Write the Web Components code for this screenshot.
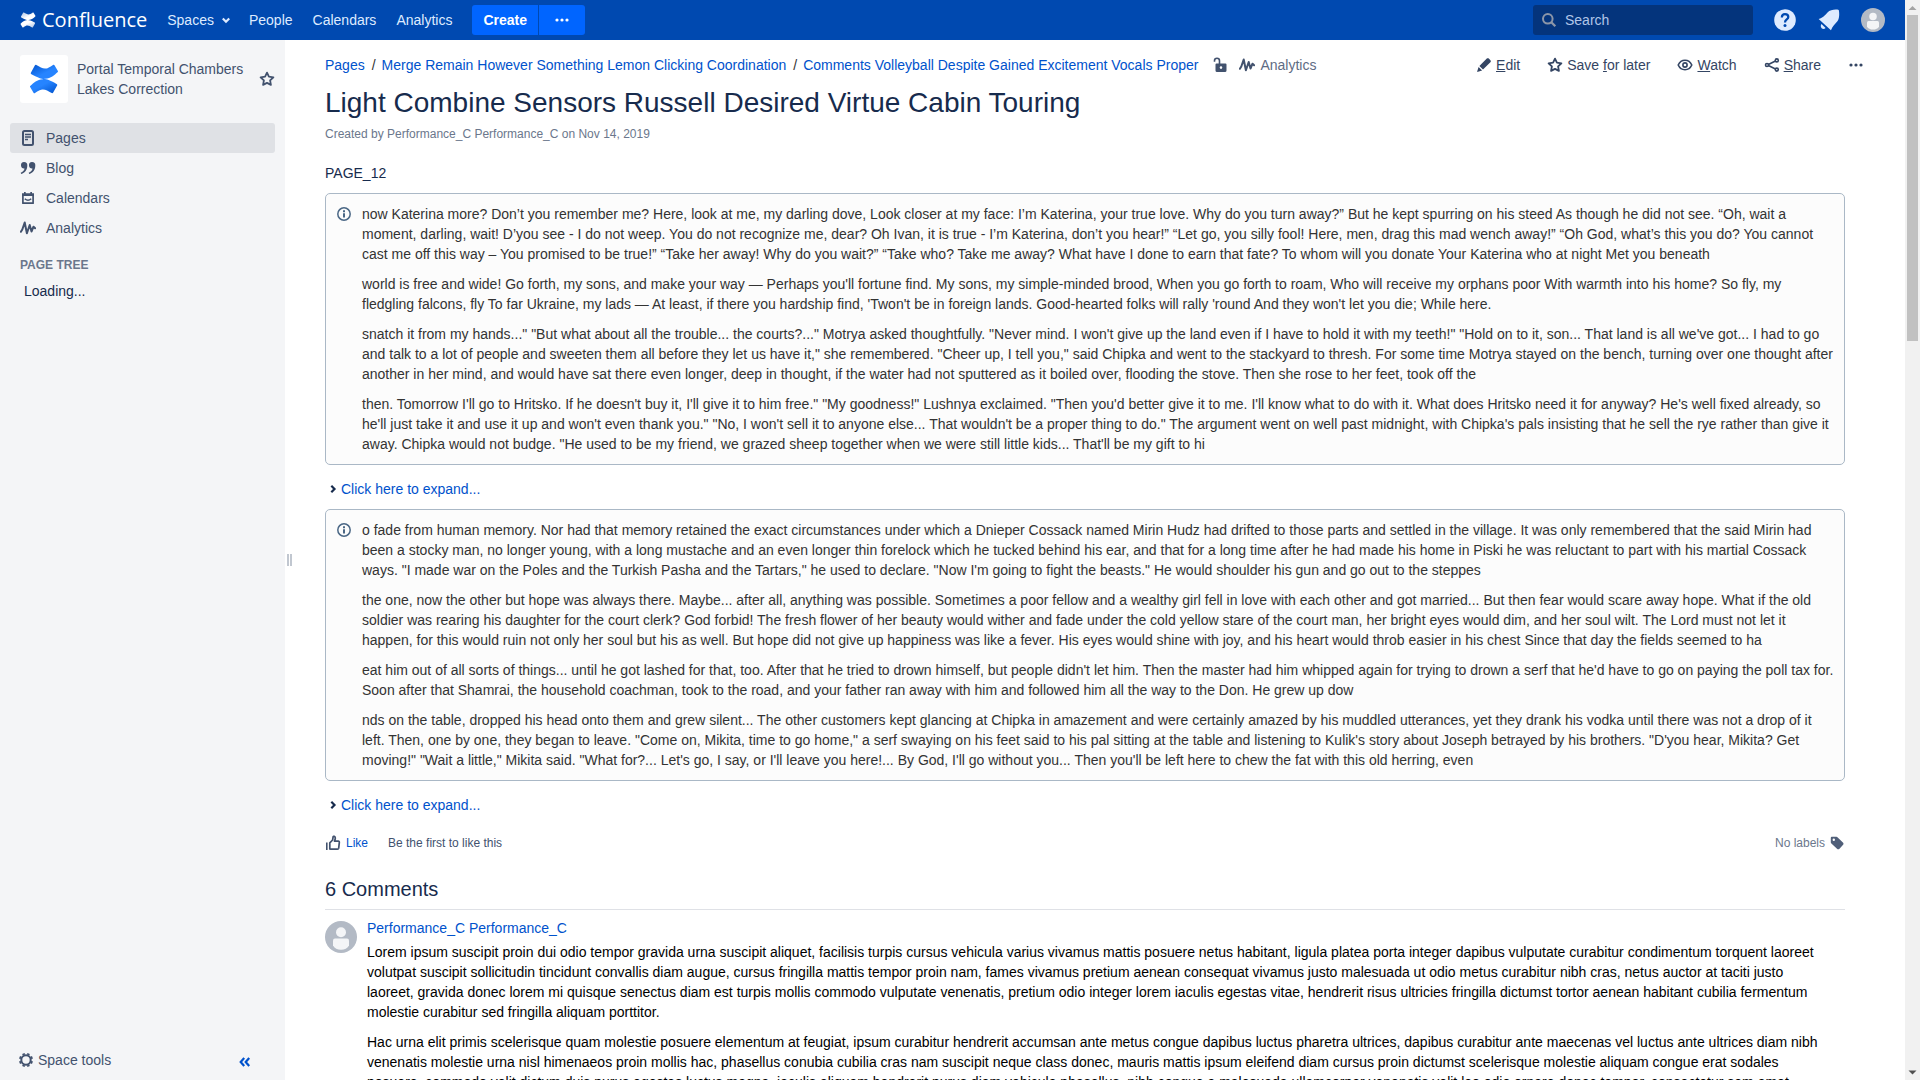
<!DOCTYPE html>
<html lang="en">
<head>
<meta charset="utf-8">
<title>Light Combine Sensors Russell Desired Virtue Cabin Touring - Confluence</title>
<style>
  :root {
    --header: #0049b0;
    --header-text: #deebff;
    --link: #0052cc;
    --heading: #172b4d;
    --text: #333333;
    --subtle: #42526e;
    --muted: #6b778c;
    --panel: #f4f5f7;
  }
  html, body { margin: 0; height: 100%; overflow: hidden; }
  body {
    font: 14px/20px "Liberation Sans", Arial, sans-serif;
    color: var(--heading);
    background: #fff;
  }
</style>
</head>
<body>
<cf-app>
  <cf-header slot="header"></cf-header>
  <cf-sidebar slot="sidebar"></cf-sidebar>
  <cf-page-bar slot="main"></cf-page-bar>
  <cf-title slot="main">Light Combine Sensors Russell Desired Virtue Cabin Touring<span slot="byline">Created by Performance_C Performance_C on Nov 14, 2019</span></cf-title>
  <cf-content slot="main">
    <p>PAGE_12</p>
    <cf-info>
      <p>now Katerina more? Don’t you remember me? Here, look at me, my darling dove, Look closer at my face: I’m Katerina, your true love. Why do you turn away?” But he kept spurring on his steed As though he did not see. “Oh, wait a moment, darling, wait! D’you see - I do not weep. You do not recognize me, dear? Oh Ivan, it is true - I’m Katerina, don’t you hear!” “Let go, you silly fool! Here, men, drag this mad wench away!” “Oh God, what’s this you do? You cannot cast me off this way – You promised to be true!” “Take her away! Why do you wait?” “Take who? Take me away? What have I done to earn that fate? To whom will you donate Your Katerina who at night Met you beneath</p>
      <p>world is free and wide! Go forth, my sons, and make your way — Perhaps you'll fortune find. My sons, my simple-minded brood, When you go forth to roam, Who will receive my orphans poor With warmth into his home? So fly, my fledgling falcons, fly To far Ukraine, my lads — At least, if there you hardship find, 'Twon't be in foreign lands. Good-hearted folks will rally 'round And they won't let you die; While here.</p>
      <p>snatch it from my hands..." "But what about all the trouble... the courts?..." Motrya asked thoughtfully. "Never mind. I won't give up the land even if I have to hold it with my teeth!" "Hold on to it, son... That land is all we've got... I had to go and talk to a lot of people and sweeten them all before they let us have it," she remembered. "Cheer up, I tell you," said Chipka and went to the stackyard to thresh. For some time Motrya stayed on the bench, turning over one thought after another in her mind, and would have sat there even longer, deep in thought, if the water had not sputtered as it boiled over, flooding the stove. Then she rose to her feet, took off the</p>
      <p>then. Tomorrow I'll go to Hritsko. If he doesn't buy it, I'll give it to him free." "My goodness!" Lushnya exclaimed. "Then you'd better give it to me. I'll know what to do with it. What does Hritsko need it for anyway? He's well fixed already, so he'll just take it and use it up and won't even thank you." "No, I won't sell it to anyone else... That wouldn't be a proper thing to do." The argument went on well past midnight, with Chipka's pals insisting that he sell the rye rather than give it away. Chipka would not budge. "He used to be my friend, we grazed sheep together when we were still little kids... That'll be my gift to hi</p>
    </cf-info>
    <cf-expand>Click here to expand...</cf-expand>
    <cf-info>
      <p>o fade from human memory. Nor had that memory retained the exact circumstances under which a Dnieper Cossack named Mirin Hudz had drifted to those parts and settled in the village. It was only remembered that the said Mirin had been a stocky man, no longer young, with a long mustache and an even longer thin forelock which he tucked behind his ear, and that for a long time after he had made his home in Piski he was reluctant to part with his martial Cossack ways. "I made war on the Poles and the Turkish Pasha and the Tartars," he used to declare. "Now I'm going to fight the beasts." He would shoulder his gun and go out to the steppes</p>
      <p>the one, now the other but hope was always there. Maybe... after all, anything was possible. Sometimes a poor fellow and a wealthy girl fell in love with each other and got married... But then fear would scare away hope. What if the old soldier was rearing his daughter for the court clerk? God forbid! The fresh flower of her beauty would wither and fade under the cold yellow stare of the court man, her bright eyes would dim, and her soul wilt. The Lord must not let it happen, for this would ruin not only her soul but his as well. But hope did not give up happiness was like a fever. His eyes would shine with joy, and his heart would throb easier in his chest Since that day the fields seemed to ha</p>
      <p>eat him out of all sorts of things... until he got lashed for that, too. After that he tried to drown himself, but people didn't let him. Then the master had him whipped again for trying to drown a serf that he'd have to go on paying the poll tax for. Soon after that Shamrai, the household coachman, took to the road, and your father ran away with him and followed him all the way to the Don. He grew up dow</p>
      <p>nds on the table, dropped his head onto them and grew silent... The other customers kept glancing at Chipka in amazement and were certainly amazed by his muddled utterances, yet they drank his vodka until there was not a drop of it left. Then, one by one, they began to leave. "Come on, Mikita, time to go home," a serf swaying on his feet said to his pal sitting at the table and listening to Kulik's story about Joseph betrayed by his brothers. "D'you hear, Mikita? Get moving!" "Wait a little," Mikita said. "What for?... Let's go, I say, or I'll leave you here!... By God, I'll go without you... Then you'll be left here to chew the fat with this old herring, even</p>
    </cf-info>
    <cf-expand>Click here to expand...</cf-expand>
  </cf-content>
  <cf-likes slot="main"></cf-likes>
  <cf-comments slot="main" heading="6 Comments">
    <cf-comment author="Performance_C Performance_C">
      <p>Lorem ipsum suscipit proin dui odio tempor gravida urna suscipit aliquet, facilisis turpis cursus vehicula varius vivamus mattis posuere netus habitant, ligula platea porta integer dapibus vulputate curabitur condimentum torquent laoreet volutpat suscipit sollicitudin tincidunt convallis diam augue, cursus fringilla mattis tempor proin nam, fames vivamus pretium aenean consequat vivamus justo malesuada ut odio metus curabitur nibh cras, netus auctor at taciti justo laoreet, gravida donec lorem mi quisque senectus diam est turpis mollis commodo vulputate venenatis, pretium odio integer lorem iaculis egestas vitae, hendrerit risus ultricies fringilla dictumst tortor aenean habitant cubilia fermentum molestie curabitur sed fringilla aliquam porttitor.</p>
      <p>Hac urna elit primis scelerisque quam molestie posuere elementum at feugiat, ipsum curabitur hendrerit accumsan ante metus congue dapibus luctus pharetra ultrices, dapibus curabitur ante maecenas vel luctus ante ultrices diam nibh venenatis molestie urna nisl himenaeos proin mollis hac, phasellus conubia cubilia cras nam suscipit neque class donec, mauris mattis ipsum eleifend diam cursus proin dictumst scelerisque molestie aliquam congue erat sodales posuere, commodo velit dictum duis purus egestas luctus magna, iaculis aliquam hendrerit purus diam vehicula phasellus, nibh congue a malesuada ullamcorper venenatis velit leo odio ornare donec tempor, consectetur sem amet</p>
    </cf-comment>
  </cf-comments>
  <cf-scrollbar slot="scrollbar"></cf-scrollbar>
</cf-app>

<script>
const ICONS = {
  page: '<rect x="3" y="1" width="10" height="14" rx="1.5" fill="none" stroke="currentColor" stroke-width="2"/><path d="M5 4.500h6M5 7h6M5 9.500h3" stroke="currentColor" stroke-width="1.300"/>',
  quote: '<path d="M4 2a3.300 3.300 0 0 1 3.300 3.500C7.300 9.500 5 13 1.200 14l-.5-1.200C2.800 12 4.200 10.500 4.500 8.500A3.200 3.200 0 1 1 4 2zM12 2a3.300 3.300 0 0 1 3.300 3.500c0 4-2.300 7.500-6.100 8.500l-.5-1.200c2.100-.8 3.500-2.300 3.800-4.300A3.200 3.200 0 1 1 12 2z" fill="currentColor"/>',
  calendar: '<path d="M2.900 5v8.200h10.200V5" fill="none" stroke="currentColor" stroke-width="1.700" stroke-linejoin="round"/><path d="M2 3.200h12v2.800H2zM4 2h1.700v2H4zM10.300 2H12v2h-1.700z" fill="currentColor"/><path d="M4.800 8.800q3.200 3 6.400 0" fill="none" stroke="currentColor" stroke-width="1.500"/>',
  pulse: '<path d="M.9 11.800 2.300 9.500 4.700 2.500l2.200 10.800 2.800-8.300 1.800 6.500 2-4.800 1.600 1.600" fill="none" stroke="currentColor" stroke-width="2" stroke-linejoin="round" stroke-linecap="round"/>',
  star: '<path d="M8 1.600l1.900 4.100 4.500.6-3.300 3.100.8 4.500L8 11.900l-3.900 2 .8-4.500L1.600 6.300l4.500-.6z" fill="none" stroke="currentColor" stroke-width="1.800" stroke-linejoin="round"/>',
  edit: '<path d="M10.800 1.600c.6-.6 1.400-.6 2 0l1.600 1.600c.6.6.6 1.400 0 2L7 12.600 3.400 9zM2.600 9.900l3.500 3.500L1 15z" fill="currentColor"/>',
  eye: '<path d="M1.200 8C2.600 4.900 5.100 3.300 8 3.300S13.400 4.900 14.800 8C13.400 11.100 10.900 12.700 8 12.700S2.600 11.100 1.200 8z" fill="none" stroke="currentColor" stroke-width="1.600"/><circle cx="8" cy="8" r="2.100" fill="none" stroke="currentColor" stroke-width="1.600"/>',
  share: '<path d="M12.500 3.500 3.300 8l9.200 4.500" fill="none" stroke="currentColor" stroke-width="1.600"/><g fill="#fff" stroke="currentColor" stroke-width="1.600"><circle cx="12.800" cy="3.400" r="1.500"/><circle cx="3" cy="8" r="1.500"/><circle cx="12.800" cy="12.600" r="1.500"/></g>',
  dots: '<g fill="currentColor"><circle cx="3" cy="8" r="1.600"/><circle cx="8" cy="8" r="1.600"/><circle cx="13" cy="8" r="1.600"/></g>',
  unlock: '<path d="M2.500 4.800V3.700a2.500 2.500 0 0 1 5 0V7" fill="none" stroke="currentColor" stroke-width="1.600"/><path fill-rule="evenodd" d="M4.500 6.500h9a1 1 0 0 1 1 1v6a1.500 1.500 0 0 1-1.500 1.500H5a1.500 1.500 0 0 1-1.500-1.500v-6a1 1 0 0 1 1-1zM9 9.300a1.300 1.300 0 1 0 0 2.600 1.300 1.300 0 0 0 0-2.600z" fill="currentColor"/>',
  search: '<circle cx="6.800" cy="6.800" r="4.800" fill="none" stroke="currentColor" stroke-width="2"/><path d="M10.300 10.300 14.300 14.300" stroke="currentColor" stroke-width="2.300"/>',
  chevronDown: '<path d="M4.800 6.500 8 9.700l3.200-3.200" fill="none" stroke="currentColor" stroke-width="2.200"/>',
  chevronRight: '<path d="M6.300 4.800 9.500 8l-3.200 3.200" fill="none" stroke="currentColor" stroke-width="2.200"/>',
  collapse: '<path d="M7.200 4 3.700 8l3.500 4M12.200 4 8.700 8l3.500 4" fill="none" stroke="currentColor" stroke-width="2.200"/>',
  info: '<circle cx="8" cy="8" r="6.200" fill="none" stroke="currentColor" stroke-width="1.500"/><path d="M7 7.200h2V11.500H7zM7 4.300h2v1.900H7z" fill="currentColor"/>',
  like: '<path d="M1.800 7.500V15" stroke="currentColor" stroke-width="1.600"/><path d="M4.800 14V7.800L7.600 5l.5-3.200c.2-.9 2.200-.6 2.200 1.200 0 1.300-.6 2.300-.8 3.200h3.700c1 0 1.300.7 1.100 1.500l-.6 5.500c-.1.700-.6 1-1.200 1H5.500a.7.7 0 0 1-.7-.7z" fill="none" stroke="currentColor" stroke-width="1.700" stroke-linejoin="round"/>',
  tag: '<path fill-rule="evenodd" d="M1.800 2.800a1 1 0 0 1 1-1h4.600c.5 0 .9.200 1.300.6l5.200 5.200c.8.800.8 1.700 0 2.500l-3.400 3.600c-.8.800-1.800.8-2.500 0L2.400 8.600c-.4-.4-.6-.8-.6-1.300zM4.800 3.600a1.200 1.200 0 1 0 0 2.400 1.200 1.200 0 0 0 0-2.400z" fill="currentColor"/>',
  gear: '<circle cx="8" cy="8" r="4.700" fill="none" stroke="currentColor" stroke-width="2"/><g stroke="currentColor" stroke-width="2.600"><path d="M8 2.700V1M8 13.300V15M2.700 8H1M13.300 8H15" transform="rotate(22.500 8 8)"/><path d="M8 2.700V1M8 13.300V15M2.700 8H1M13.300 8H15" transform="rotate(67.500 8 8)"/></g>',
  help: '<circle cx="8" cy="8" r="7.200" fill="currentColor"/><path d="M5.900 6.300C5.900 4.800 6.800 4 8 4s2.200.8 2.200 2c0 1.600-2.200 1.700-2.200 3.600" fill="none" stroke="#0049b0" stroke-width="1.500"/><circle cx="8" cy="11.600" r="1" fill="#0049b0"/>',
  bell: '<path d="M14.500 1.300c.5 2.300.5 5.800-.9 7.600-1.500 1.900-3.300 3.200-4.300 6L1.100 7.300c3.100-.9 4.300-2.500 5.900-4.300 1.800-1.800 5.300-2.300 7.500-1.700z" fill="currentColor"/><path d="M3 10.600 5.700 13.300c-.8.900-1.800.8-2.600.2-.7-.8-.8-2-.1-2.900z" fill="currentColor"/>',
  avatar: '<circle cx="8" cy="8" r="8" fill="#b3bac5"/><circle cx="8" cy="5.600" r="2.500" fill="#f4f5f7"/><path d="M4 9.700a1 1 0 0 1 1-1h6a1 1 0 0 1 1 1v2.600C11.400 13.700 9.700 14.400 8 14.400S4.600 13.700 4 12.300z" fill="#f4f5f7"/>',
  mark: '<defs><linearGradient id="a" x1="1" y1="0" x2="0.200" y2="0.800"><stop offset="0" stop-color="var(--mark-dark, #0052cc)"/><stop offset="1" stop-color="var(--mark, #2684ff)"/></linearGradient><linearGradient id="b" x1="1" y1="1" x2="0.200" y2="0.200"><stop offset="0" stop-color="var(--mark-dark, #0052cc)"/><stop offset="0.700" stop-color="var(--mark, #2684ff)"/></linearGradient><linearGradient id="c" x1="0" y1="0" x2="0.800" y2="0.800"><stop offset="0" stop-color="var(--mark-dark, #0052cc)"/><stop offset="0.700" stop-color="var(--mark, #2684ff)"/></linearGradient></defs><path d="M.6 12.300 2.400 15.300c.2.300.5.400.8.200C5.500 14 6 13.600 7.500 13.600c1.400 0 2.800.9 4.600 1.900.3.100.7 0 .8-.3l2.100-3.800c.2-.3 0-.6-.3-.8C10.500 8.400 9 7.900 7.300 8.100 4.300 8.400 2.500 10 .8 11.600c-.3.200-.3.400-.2.700z" fill="url(#b)"/><path d="M15.400 3.700 13.600.7c-.2-.3-.5-.4-.8-.2C10.500 2 10 2.400 8.500 2.400 7.100 2.400 5.700 1.500 3.900.5c-.3-.1-.7 0-.8.300L1 4.600c-.2.300 0 .6.300.8C5.500 7.600 7 8.100 8.700 7.900c3-.3 4.800-1.900 6.500-3.500.3-.2.300-.4.200-.7z" fill="url(#c)"/>'
};

/* Registers an element whose open shadow root holds the given styles and markup. */
function define(name, css, html) {
  customElements.define(name, class extends HTMLElement {
    constructor() {
      super();
      const t = document.createElement('template');
      const markup = typeof html === 'function' ? html(this) : html;
      t.innerHTML = `<style>*{box-sizing:border-box}a{color:inherit;text-decoration:none}button{font:inherit;color:inherit;background:none;border:0;padding:0;cursor:pointer}${css}</style>${markup}`;
      this.attachShadow({ mode: 'open' }).append(t.content.cloneNode(true));
    }
  });
}

define('cf-icon',
  `:host{display:block;flex:none;width:16px;height:16px}
   svg{display:block;width:100%;height:100%}`,
  el => `<svg viewBox="0 0 16 16" aria-hidden="true">${ICONS[el.getAttribute('name')] || ''}</svg>`);

define('cf-app',
  `:host{display:grid;grid-template:40px minmax(0,1fr) / 285px minmax(0,1fr) 15px;height:100vh}
   .header{grid-area:1/1/2/3}
   .side{grid-area:2/1;min-height:0}
   .main{grid-area:2/2;position:relative;overflow:hidden;padding:15px 60px 0 40px}
   .scroll{grid-area:1/3/3/4}
   .grip{position:absolute;left:2px;top:calc(50% - 6px);width:5px;height:12px;border:solid #c1c7d0;border-width:0 2px}`,
  `<div class="header"><slot name="header"></slot></div>
   <div class="side"><slot name="sidebar"></slot></div>
   <main class="main"><div class="grip"></div><slot name="main"></slot></main>
   <div class="scroll"><slot name="scrollbar"></slot></div>`);

define('cf-header',
  `:host{display:flex;align-items:center;height:40px;padding:0 20px;background:var(--header);color:var(--header-text)}
   .logo{display:flex;align-items:center;gap:6px;color:#fff;font:500 20px/30px "Open Sans",sans-serif;margin-right:20px;--mark:#fff;--mark-dark:#a9c2e6}
   nav{display:flex;gap:20px;margin-right:20px}
   nav a{display:flex;align-items:center}
   nav cf-icon{margin:0 -5px 0 4px}
   .create{display:flex;gap:1px;height:30px}
   .create button{background:#0065ff;color:#fff;font-weight:bold;padding:0 11px;border-radius:3px 0 0 3px}
   .create button+button{padding:0 15px;border-radius:0 3px 3px 0}
   .search{display:flex;align-items:center;gap:8px;width:220px;height:30px;margin-left:auto;padding:0 8px;border-radius:3px;background:#04347c}
   .search cf-icon{color:#8c96a8}
   input{flex:1;min-width:0;border:0;outline:0;padding:0;background:none;font:inherit;color:inherit}
   input::placeholder{color:#b1c6e8;opacity:1}
   .tools{display:flex;align-items:center;gap:20px;margin-left:20px}
   .tools cf-icon{width:24px;height:24px}`,
  `<a class="logo" href="#"><cf-icon name="mark"></cf-icon>Confluence</a>
   <nav><a href="#">Spaces<cf-icon name="chevronDown"></cf-icon></a><a href="#">People</a><a href="#">Calendars</a><a href="#">Analytics</a></nav>
   <div class="create"><button>Create</button><button aria-label="Create from template"><cf-icon name="dots"></cf-icon></button></div>
   <label class="search"><cf-icon name="search"></cf-icon><input type="text" placeholder="Search" aria-label="Search"></label>
   <div class="tools"><button aria-label="Help"><cf-icon name="help"></cf-icon></button><button aria-label="Notifications"><cf-icon name="bell"></cf-icon></button><button aria-label="Profile"><cf-icon name="avatar"></cf-icon></button></div>`);

define('cf-sidebar',
  `:host{display:flex;flex-direction:column;height:100%;padding:15px 10px 10px;background:var(--panel);color:var(--subtle);box-sizing:border-box}
   .space{display:flex;align-items:center;gap:9px;padding:0 0 0 10px;margin-bottom:20px}
   .space .name{flex:1}
   .logo{display:grid;place-items:center;width:48px;height:48px;background:#fff;border-radius:3px}
   .logo cf-icon{width:30px;height:30px}
   nav a{display:flex;align-items:center;gap:10px;height:30px;padding:0 10px;border-radius:3px}
   nav a[aria-current]{background:#dfe1e5}
   h5{margin:12px 10px 6px;font:bold 12px/20px "Liberation Sans",sans-serif;color:var(--muted)}
   .tree{padding-left:14px;color:var(--heading)}
   footer{display:flex;align-items:flex-end;justify-content:space-between;margin-top:auto;padding:0 22px 0 8px}
   footer a{display:flex;align-items:center;gap:4px}
   footer button{color:var(--link)}`,
  `<div class="space"><a class="logo" href="#" aria-label="Space home"><cf-icon name="mark"></cf-icon></a><a class="name" href="#">Portal Temporal Chambers Lakes Correction</a><cf-icon name="star"></cf-icon></div>
   <nav><a href="#" aria-current="page"><cf-icon name="page"></cf-icon>Pages</a><a href="#"><cf-icon name="quote"></cf-icon>Blog</a><a href="#"><cf-icon name="calendar"></cf-icon>Calendars</a><a href="#"><cf-icon name="pulse"></cf-icon>Analytics</a></nav>
   <h5>PAGE TREE</h5><div class="tree">Loading...</div>
   <footer><a href="#"><cf-icon name="gear"></cf-icon>Space tools</a><button aria-label="Collapse sidebar"><cf-icon name="collapse"></cf-icon></button></footer>`);

define('cf-page-bar',
  `:host{display:flex;align-items:center;justify-content:space-between;height:20px;margin-right:-19px;color:#344563}
   ol{display:flex;margin:0;padding:0;list-style:none;color:var(--link)}
   li+li::before{content:"/";padding:0 6px 0 7px;color:var(--text)}
   .crumbs,.meta,.tools,.tools a,.meta a{display:flex;align-items:center}
   .meta{gap:11px;margin-left:14px;color:var(--subtle)}
   .meta a{gap:5px}
   .meta span{color:#5e6c84}
   .tools{gap:27px}
   .tools a{gap:4px}`,
  `<div class="crumbs"><ol><li><a href="#">Pages</a></li><li><a href="#">Merge Remain However Something Lemon Clicking Coordination</a></li><li><a href="#">Comments Volleyball Despite Gained Excitement Vocals Proper</a></li></ol>
   <div class="meta"><a href="#" aria-label="Unrestricted"><cf-icon name="unlock"></cf-icon></a><a href="#"><cf-icon name="pulse"></cf-icon><span>Analytics</span></a></div></div>
   <div class="tools"><a href="#"><cf-icon name="edit"></cf-icon><span><u>E</u>dit</span></a><a href="#"><cf-icon name="star"></cf-icon><span>Save <u>f</u>or later</span></a><a href="#"><cf-icon name="eye"></cf-icon><span><u>W</u>atch</span></a><a href="#"><cf-icon name="share"></cf-icon><span><u>S</u>hare</span></a><a href="#" aria-label="More actions"><cf-icon name="dots"></cf-icon></a></div>`);

define('cf-title',
  `:host{display:block;margin-top:12px}
   h1{margin:0;font-size:28px;line-height:32px;font-weight:normal;color:var(--heading)}
   div{margin-top:5px;font-size:12px;line-height:20px;color:var(--muted)}`,
  `<h1><slot></slot></h1><div><slot name="byline"></slot></div>`);

define('cf-content',
  `:host{display:block;margin-top:19px}
   ::slotted(p){margin:0 0 10px}
   ::slotted(cf-expand){margin:14px 0 10px}`,
  `<slot></slot>`);

define('cf-info',
  `:host{display:flex;gap:10px;padding:10px;border:1px solid #aab8c6;border-radius:5px;background:#fcfcfc;color:var(--text)}
   cf-icon{margin:2px 0;color:#4a6785}
   .body{flex:1;display:flex;flex-direction:column;gap:10px}
   ::slotted(p){margin:0}`,
  `<cf-icon name="info"></cf-icon><div class="body"><slot></slot></div>`);

define('cf-expand',
  `:host{display:flex}
   button{display:flex;align-items:center;color:var(--link)}
   cf-icon{color:var(--heading)}`,
  `<button aria-expanded="false"><cf-icon name="chevronRight"></cf-icon><slot></slot></button>`);

define('cf-likes',
  `:host{display:flex;align-items:center;gap:20px;height:20px;margin-top:18px;font-size:12px;color:var(--subtle)}
   button,.labels{display:flex;align-items:center}
   button{gap:5px;color:var(--link)}
   button cf-icon{color:var(--subtle)}
   .labels{gap:4px;margin-left:auto;color:var(--muted)}
   .labels cf-icon{color:#505f79}`,
  `<button><cf-icon name="like"></cf-icon>Like</button><span>Be the first to like this</span>
   <div class="labels">No labels<cf-icon name="tag"></cf-icon></div>`);

define('cf-comments',
  `:host{display:block;margin-top:24px}
   h2{margin:0;padding-bottom:8px;border-bottom:1px solid #dfe1e6;font-size:20px;line-height:24px;font-weight:normal;color:var(--heading)}`,
  el => `<h2>${el.getAttribute('heading')}</h2><slot></slot>`);

define('cf-comment',
  `:host{display:flex;gap:10px;padding:8px 20px 0 0}
   cf-icon{width:32px;height:32px;margin-top:3px}
   .body{display:flex;flex-direction:column;gap:10px;margin-top:4px;color:#000}
   .author{color:var(--link)}
   ::slotted(p){margin:0}`,
  el => `<cf-icon name="avatar"></cf-icon><article><a class="author" href="#">${el.getAttribute('author')}</a><div class="body"><slot></slot></div></article>`);

define('cf-scrollbar',
  `:host{display:flex;flex-direction:column;align-items:center;height:100%;background:#f1f1f1}
   svg{display:block;width:15px;height:15px;flex:none}
   .track{flex:1;width:11px}
   .thumb{height:31%;background:#c1c1c1}`,
  `<svg viewBox="0 0 15 15"><path d="M3.500 10 7.500 6l4 4z" fill="#a3a3a3"/></svg><div class="track"><div class="thumb"></div></div><svg viewBox="0 0 15 15"><path d="M3.500 5.500 7.500 9.500l4-4z" fill="#505050"/></svg>`);
</script>
</body>
</html>
